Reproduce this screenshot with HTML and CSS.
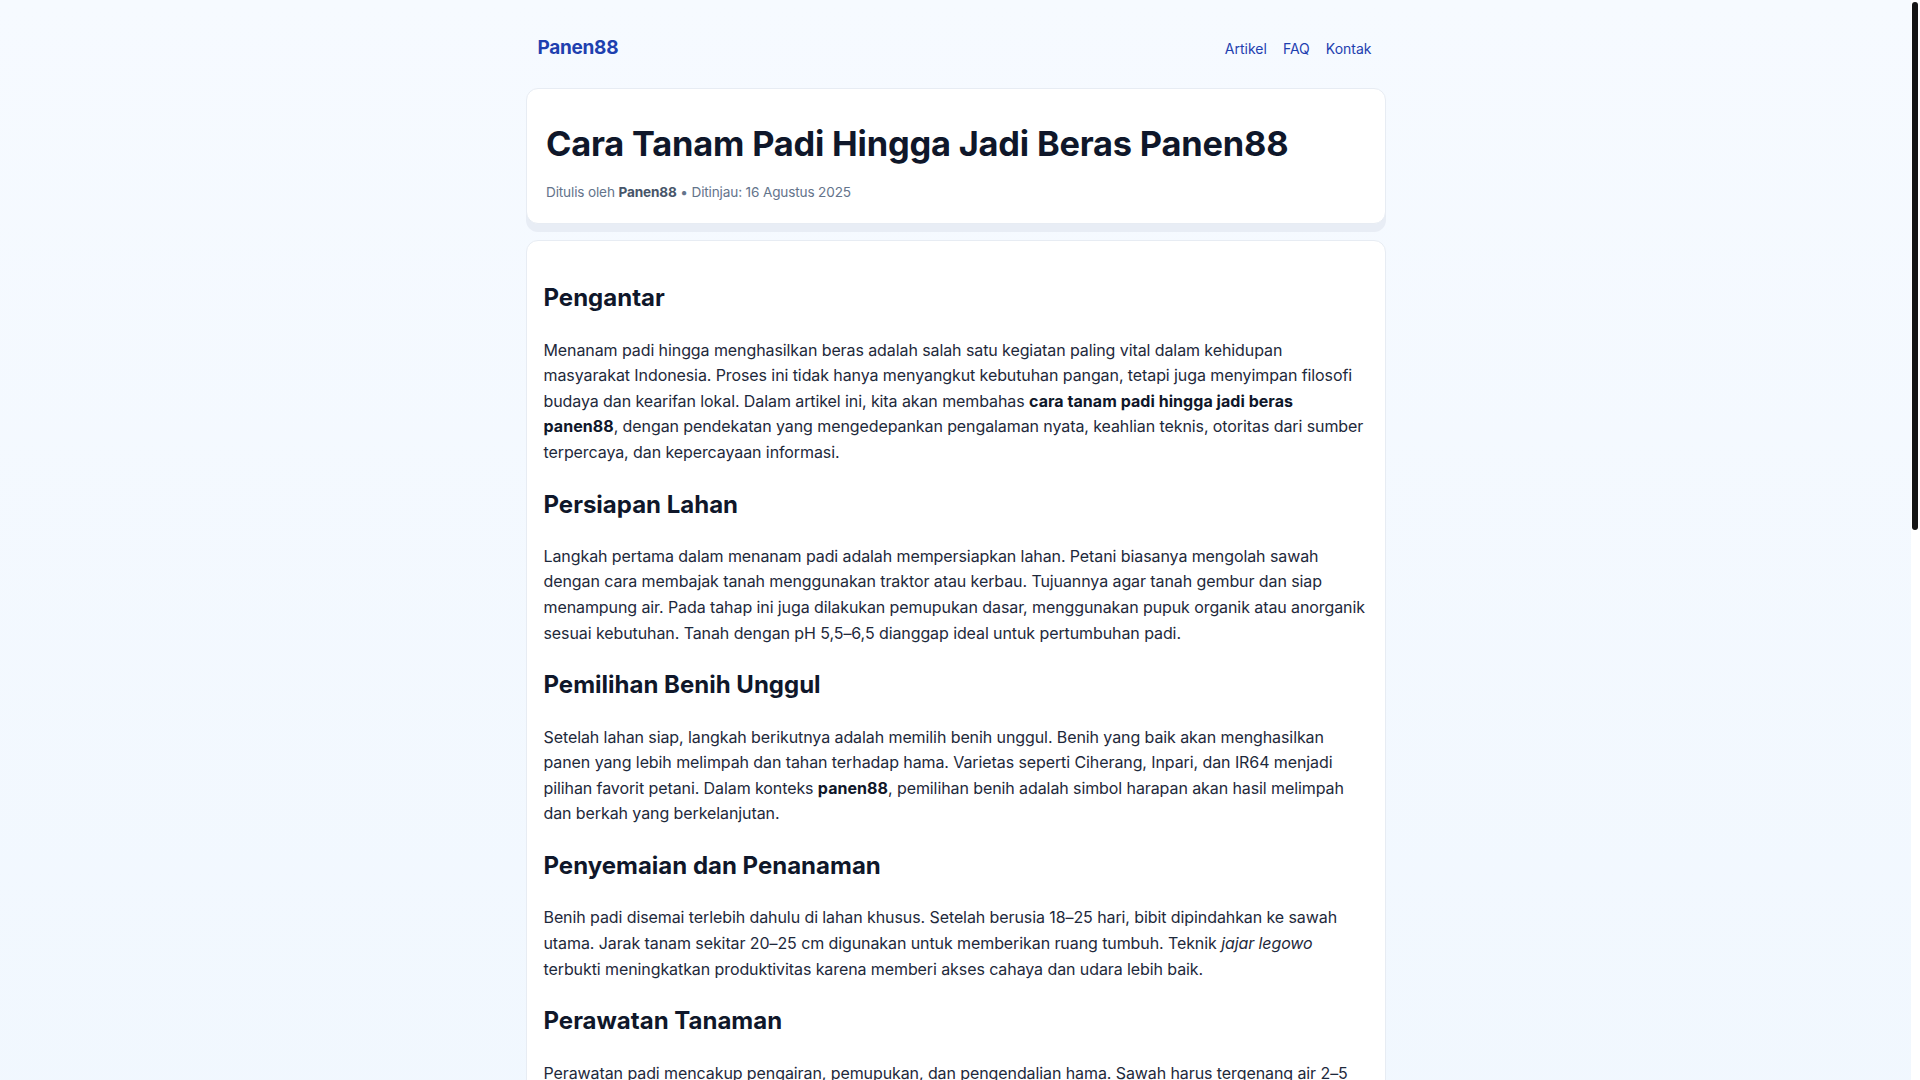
FILE: index.html
```html
<!DOCTYPE html>
<html lang="id">
<head>
<meta charset="utf-8">
<title>Cara Tanam Padi Hingga Jadi Beras Panen88</title>
<link rel="stylesheet" href="styles.css">
</head>
<body>
<div class="page">
  <header class="site-header">
    <a class="logo" href="#">Panen88</a>
    <nav class="nav">
      <a href="#">Artikel</a>
      <a href="#">FAQ</a>
      <a href="#">Kontak</a>
    </nav>
  </header>

  <section class="card title-card">
    <h1>Cara Tanam Padi Hingga Jadi Beras Panen88</h1>
    <p class="meta">Ditulis oleh <strong>Panen88</strong> • Ditinjau: 16 Agustus 2025</p>
  </section>

  <article class="card article">
    <h2>Pengantar</h2>
    <p>Menanam padi hingga menghasilkan beras adalah salah satu kegiatan paling vital dalam kehidupan masyarakat Indonesia. Proses ini tidak hanya menyangkut kebutuhan pangan, tetapi juga menyimpan filosofi budaya dan kearifan lokal. Dalam artikel ini, kita akan membahas <strong>cara tanam padi hingga jadi beras panen88</strong>, dengan pendekatan yang mengedepankan pengalaman nyata, keahlian teknis, otoritas dari sumber terpercaya, dan kepercayaan informasi.</p>

    <h2>Persiapan Lahan</h2>
    <p>Langkah pertama dalam menanam padi adalah mempersiapkan lahan. Petani biasanya mengolah sawah dengan cara membajak tanah menggunakan traktor atau kerbau. Tujuannya agar tanah gembur dan siap menampung air. Pada tahap ini juga dilakukan pemupukan dasar, menggunakan pupuk organik atau anorganik sesuai kebutuhan. Tanah dengan pH 5,5–6,5 dianggap ideal untuk pertumbuhan padi.</p>

    <h2>Pemilihan Benih Unggul</h2>
    <p>Setelah lahan siap, langkah berikutnya adalah memilih benih unggul. Benih yang baik akan menghasilkan panen yang lebih melimpah dan tahan terhadap hama. Varietas seperti Ciherang, Inpari, dan IR64 menjadi pilihan favorit petani. Dalam konteks <strong>panen88</strong>, pemilihan benih adalah simbol harapan akan hasil melimpah dan berkah yang berkelanjutan.</p>

    <h2>Penyemaian dan Penanaman</h2>
    <p>Benih padi disemai terlebih dahulu di lahan khusus. Setelah berusia 18–25 hari, bibit dipindahkan ke sawah utama. Jarak tanam sekitar 20–25 cm digunakan untuk memberikan ruang tumbuh. Teknik <em>jajar legowo</em> terbukti meningkatkan produktivitas karena memberi akses cahaya dan udara lebih baik.</p>

    <h2>Perawatan Tanaman</h2>
    <p>Perawatan padi mencakup pengairan, pemupukan, dan pengendalian hama. Sawah harus tergenang air 2–5 cm pada fase vegetatif, lalu dikeringkan secara berkala agar akar tumbuh kuat. Pemupukan susulan dengan urea dan NPK diberikan sesuai umur tanaman, sementara hama seperti wereng dan tikus dikendalikan dengan cara terpadu.</p>

    <h2>Masa Panen</h2>
    <p>Padi siap dipanen ketika 90–95% bulir telah menguning, biasanya pada umur 110–120 hari setelah tanam. Panen dilakukan dengan sabit atau mesin <em>combine harvester</em>. Waktu panen yang tepat sangat menentukan kualitas gabah dan jumlah hasil yang diperoleh petani.</p>

    <h2>Pascapanen dan Penggilingan</h2>
    <p>Setelah dipanen, gabah dirontokkan lalu dijemur hingga kadar airnya sekitar 14%. Gabah kering kemudian digiling untuk memisahkan kulit dan menghasilkan beras. Beras yang baik berwarna bening, utuh, dan bebas dari kotoran. Inilah momen ketika kerja keras petani benar-benar menjadi <strong>panen88</strong> yang membawa berkah.</p>

    <h2>Kesimpulan</h2>
    <p>Proses menanam padi hingga menjadi beras membutuhkan ketekunan, pengetahuan, dan kerja sama. Dengan memahami setiap tahapan, mulai dari persiapan lahan hingga penggilingan, kita dapat lebih menghargai setiap butir nasi yang tersaji di meja makan.</p>
  </article>

  <footer class="site-footer">
    <p>© 2025 Panen88. Semua hak dilindungi.</p>
  </footer>
</div>
<div class="scrollbar" aria-hidden="true"><div class="scrollbar-thumb"></div></div>
</body>
</html>
```

FILE: styles.css
```css
html {
  background: #f3f8fe;
}

body {
  margin: 0;
  padding-right: 9px;
  min-height: 100vh;
  background: linear-gradient(180deg, #f6faff 0%, #eef6fe 100%);
  font-family: "Inter", "Noto Sans", sans-serif;
  font-size: 16px;
  line-height: 1.6;
  color: #1e293b;
}

.scrollbar {
  position: fixed;
  top: 0;
  right: 0;
  width: 9px;
  height: 100vh;
  background: #ffffff;
}

.scrollbar-thumb {
  margin: 2px 2px 0 1px;
  height: 528px;
  background: #141414;
  border-radius: 3px;
}

.page {
  max-width: 860px;
  margin: 0 auto;
  padding: 33px 0 24px;
}

.site-header {
  display: flex;
  justify-content: space-between;
  align-items: baseline;
  padding: 0 14px 0 12px;
  margin-bottom: 25px;
}

.logo {
  font-size: 19px;
  font-weight: 700;
  letter-spacing: -0.3px;
  color: #1e40af;
  text-decoration: none;
}

.nav {
  display: flex;
  gap: 16px;
}

.nav a {
  font-size: 14px;
  color: #1e40af;
  text-decoration: none;
}

.card {
  background: #ffffff;
  border: 1px solid #e7ecf3;
  border-radius: 12px;
  padding: 18px 17px;
}

.title-card {
  padding: 18px 19.5px 19px;
  box-shadow: 0 8px 0 #e8edf5;
  margin-bottom: 16.5px;
}

.title-card h1 {
  font-size: 34.4px;
  line-height: 1.25;
  font-weight: 700;
  color: #0f172a;
  margin: 15px 0 16.5px;
  letter-spacing: -0.2px;
}

.meta {
  margin: 0;
  font-size: 13.6px;
  letter-spacing: -0.15px;
  color: #64748b;
}

.meta strong {
  color: #475569;
  font-weight: 700;
}

.article h2 {
  font-size: 24px;
  font-weight: 700;
  color: #0f172a;
  margin: 20px 0;
}

.article p {
  margin: 16px 0;
  letter-spacing: -0.09px;
}

.article strong {
  font-weight: 700;
  letter-spacing: 0.05px;
  color: #0f172a;
}

.site-footer {
  text-align: center;
  font-size: 14px;
  color: #64748b;
  padding: 24px 0 8px;
}

.site-footer p {
  margin: 0;
}
```
